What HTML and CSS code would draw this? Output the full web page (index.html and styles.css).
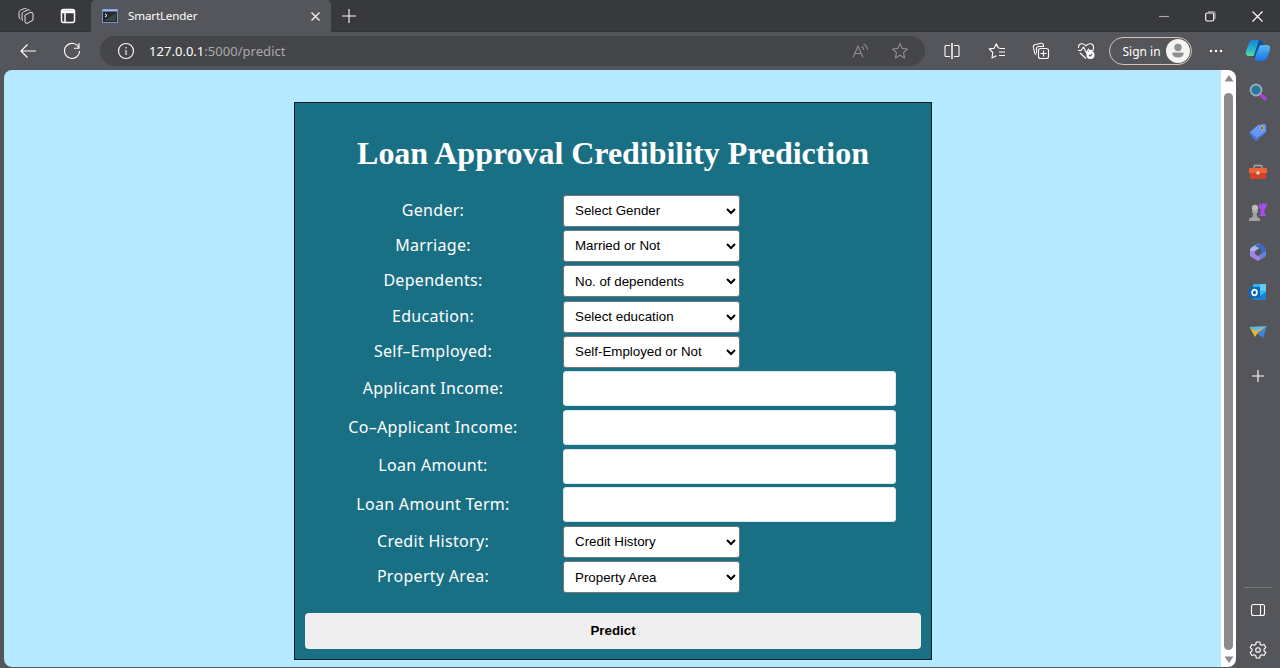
FILE: index.html
```html
<!DOCTYPE html>
<html lang="en">
<head>
<meta charset="utf-8">
<title>SmartLender</title>
<link rel="stylesheet" href="styles.css">
</head>
<body>
<div class="browser">
  <header class="tabstrip">
    <div class="strip-left">
      <svg class="ic thin" width="18" height="18" viewBox="0 0 18 18"><path d="M8 8l5-2.500q3-1 3 1.500v6l-5 3q-3 1.200-3-1.500z"/><path d="M6 14q-1-.5-1-2V7q0-1.500 1.500-2.200L11 2.800q1.500-.5 2 .8M3.500 12Q2 11.500 2 10V5.500Q2 4 3.500 3.200L7.500 1.500Q9 1 9.700 2"/></svg>
      <svg class="ic bold" width="16" height="16" viewBox="0 0 16 16"><rect x="1.500" y="1.500" width="13" height="13" rx="2"/><path d="M1.500 3h13M1.500 4.500h13M5 5v9.500"/></svg>
    </div>
    <div class="tab">
      <svg width="16" height="14" viewBox="0 0 16 14"><rect x=".5" y=".5" width="15" height="13" fill="#24292c" stroke="#7894cb"/><path d="M1 1.500h14" stroke="#9db9ee" stroke-width="2"/><path d="M3 5l2 1.500L3 8" stroke="#fff" fill="none"/><path d="M2 12L14 4v8z" fill="#3c4444"/></svg>
      <span class="tab-title">SmartLender</span>
      <svg class="ic" width="9" height="9" viewBox="0 0 9 9"><path d="M.5 .5l8 8M8.500 .5l-8 8"/></svg>
    </div>
    <svg class="ic newtab" width="14" height="14" viewBox="0 0 14 14"><path d="M7 0v14M0 7h14"/></svg>
    <div class="winctl">
      <svg class="ic dim" width="10" height="11" viewBox="0 0 10 11"><path d="M0 5.500h10"/></svg>
      <svg class="ic" width="11" height="11" viewBox="0 0 11 11"><rect x=".7" y="2" width="8" height="8" rx="1.500"/><path d="M3 .8h5.500a1.500 1.500 0 0 1 1.500 1.500V8" opacity=".6"/></svg>
      <svg class="ic" width="11" height="11" viewBox="0 0 11 11"><path d="M.5 .5l10 10M10.500 .5l-10 10"/></svg>
    </div>
  </header>

  <nav class="toolbar">
    <svg class="ic back" width="16" height="14" viewBox="0 0 16 14"><path d="M16 7H1M7.500 .5L1 7l6.500 6.500"/></svg>
    <svg class="ic reload" width="18" height="18" viewBox="0 0 18 18"><path d="M16 6.200A7.500 7.500 0 1 0 16.500 9M16 1v5.200h-5"/></svg>
    <div class="address">
      <svg class="ic" width="18" height="18" viewBox="0 0 18 18"><circle cx="9" cy="9" r="7.500"/><path d="M9 8v5M9 5v1.500"/></svg>
      <span class="url"><b>127.0.0.1</b>:5000/predict</span>
      <svg class="ic mute read" width="17" height="16" viewBox="0 0 17 16"><path d="M1 14.500L6 3l5 11.500M2.700 10.500h6.600M9.500 3.500q2 1 2.200 3.500M11.500 1q4 2 4 6"/></svg>
      <svg class="ic mute" width="18" height="18" viewBox="0 0 18 18"><path d="M9 1.500l2.200 4.900 5.300.6-4 3.600 1.200 5.400L9 13.300 4.300 16l1.200-5.400-4-3.600 5.300-.6z"/></svg>
    </div>
    <div class="tools">
      <svg class="ic" width="18" height="18" viewBox="0 0 18 18"><path d="M7 3.500H3a1 1 0 0 0-1 1v9a1 1 0 0 0 1 1h4M11 3.500h4a1 1 0 0 1 1 1v9a1 1 0 0 1-1 1h-4"/><path d="M9 1v16" stroke-width="1.500"/></svg>
      <svg class="ic" width="18" height="18" viewBox="0 0 18 18"><path d="M11.500 6l-1.300-.3L8.300 1.800 6.200 6.200l-5 .7 3.600 3.600-.8 5.500 4.300-2.300M11.500 6.500H17M11 10h6M11 13.500h6"/></svg>
      <svg class="ic" width="18" height="18" viewBox="0 0 18 18"><rect x="6.500" y="6.500" width="10" height="10" rx="2"/><path d="M11.500 8.500v6M8.500 11.500h6M4.500 12.500Q3 12.500 2.700 11L1.300 5Q1 3.300 2.700 2.700L9 1.300q1.700-.3 2.200 1.200l.5 1.700M4.500 11V6.500q0-2 2-2H12"/></svg>
      <svg class="ic" width="18" height="18" viewBox="0 0 18 18"><path d="M1.500 6C1 1 7 .5 9 4c2-3.500 8-3 7.500 2 0 1-.4 2-1 3M1 8.500h3L6.500 5l3 6 2-4 1 1.500h4M3 11l6 5.500"/><circle cx="13.500" cy="13" r="3.500" fill="#fff"/><path d="M12 13l1 1.200 2.200-2.400" stroke="#55565b"/></svg>
    </div>
    <div class="signin"><span>Sign in</span>
      <svg width="24" height="24" viewBox="0 0 24 24"><circle cx="12" cy="12" r="12" fill="#f4f4f4"/><circle cx="12" cy="8.500" r="3.700" fill="#909090"/><path d="M6.500 13.500h11v2q-1 3-5.500 3t-5.500-3z" fill="#909090"/></svg>
    </div>
    <svg class="more" width="14" height="4" viewBox="0 0 14 4"><g fill="#fff"><circle cx="2" cy="2" r="1.200"/><circle cx="7" cy="2" r="1.200"/><circle cx="12" cy="2" r="1.200"/></g></svg>
    <svg class="copilot" width="26" height="24" viewBox="0 0 26 24">
      <defs><linearGradient id="g1" x2="0" y2="1"><stop stop-color="#1785dc"/><stop offset=".6" stop-color="#26b7c7"/><stop offset="1" stop-color="#60dc94"/></linearGradient><linearGradient id="g2" x2="0" y2="1"><stop stop-color="#57baf4"/><stop offset="1" stop-color="#1672e8"/></linearGradient></defs>
      <path d="M8 1h7q3 0 2 3l-3 10q-1 3-4 3H4q-4 0-3-5L4 4q1-3 4-3z" fill="url(#g1)"/><path d="M14 1q4 0 4 3l1 2h-4l-4 10q-1 3-3 3z" fill="#174f96"/><path d="M18 6h4q4 0 3 5l-3 8q-1 3-4 3h-6q-3 0-2-3l4-10q1-3 4-3z" fill="url(#g2)"/>
    </svg>
  </nav>

  <div class="content">
    <main class="page">
      <form class="card">
        <h1>Loan Approval Credibility Prediction</h1>
        <div class="fields">
          <label>Gender:</label><select><option>Select Gender</option></select>
          <label>Marriage:</label><select><option>Married or Not</option></select>
          <label>Dependents:</label><select><option>No. of dependents</option></select>
          <label>Education:</label><select><option>Select education</option></select>
          <label>Self–Employed:</label><select><option>Self-Employed or Not</option></select>
          <label>Applicant Income:</label><input type="text">
          <label>Co–Applicant Income:</label><input type="text">
          <label>Loan Amount:</label><input type="text">
          <label>Loan Amount Term:</label><input type="text">
          <label>Credit History:</label><select><option>Credit History</option></select>
          <label>Property Area:</label><select><option>Property Area</option></select>
        </div>
        <button type="button">Predict</button>
      </form>
    </main>
    <div class="scroll">
      <svg width="10" height="7" viewBox="0 0 10 7"><path d="M5 0l4.500 6.500h-9z" fill="#8b8b8b"/></svg>
      <div class="thumb"></div>
      <svg width="10" height="7" viewBox="0 0 10 7"><path d="M5 7L.5 .5h9z" fill="#8b8b8b"/></svg>
    </div>
    <aside class="sidebar">
      <svg width="20" height="20" viewBox="0 0 20 20"><path d="M13 13l4 3.500" stroke="#b33ddd" stroke-width="3.500" stroke-linecap="round"/><circle cx="8" cy="8" r="5.500" fill="#28779f" stroke="#9badb4" stroke-width="1.800"/></svg>
      <svg width="20" height="20" viewBox="0 0 20 20"><path d="M10 3l6-1q2 0 2 2v6l-9 8q-1 1-2 0l-5-6q-1-1 0-2z" fill="#6896f4"/><path d="M2 12l5 6q1 1 2 0l9-8-1 0-8 6-7-6z" fill="#4873db"/><circle cx="14" cy="6" r="1.500" fill="#333" stroke="#e4c04b"/></svg>
      <svg width="20" height="20" viewBox="0 0 20 20"><path d="M6 6V4.500q0-1 1-1h6q1 0 1 1V6" fill="none" stroke="#aaa" stroke-width="1.300"/><rect x="1" y="6" width="18" height="5.500" rx="1" fill="#f06238"/><path d="M2 11h16v5q0 1-1 1H3q-1 0-1-1z" fill="#cf4424"/><circle cx="10" cy="11" r="1.700" fill="#ddd"/></svg>
      <svg width="20" height="20" viewBox="0 0 20 20"><path d="M11 2l2-.5.5 1.500 1-.2V1h2v1.500l1-.2V1H19l-1 5-1.500 1v4l2 3h-7l1-3V7L11 6z" fill="#a94aef"/><circle cx="7" cy="6" r="3.200" fill="#b9b9b9"/><path d="M4 9h6v2H8.500l.7 4 2.800 1.500V19H1v-2.500L4.500 15l.8-4H4z" fill="#a3a3a3"/></svg>
      <svg width="20" height="20" viewBox="0 0 20 20"><path d="M11 1L4 5q-2 1-2 3v6l5-2V9l6-4z" fill="#a5b6ec"/><path d="M11 1l6 4q1 1 1 3v6l-5-3V7L7 4z" fill="#3a69c6"/><path d="M18 9v4q0 1-1 2l-7 4-3-3 6-4z" fill="#6f7fd7"/><path d="M2 9v4q0 1 1 2l7 4 3-3-6-4V9z" fill="#a381df"/></svg>
      <svg width="20" height="20" viewBox="0 0 20 20"><rect x="5" y="2" width="13" height="15" rx="1" fill="#36b4ed"/><path d="M12 2h6v7h-6z" fill="#62cbf5"/><path d="M5 11l7 3 6-4v8H5z" fill="#1682d0"/><rect x="1" y="5" width="11" height="11" rx="1" fill="#0c68b6"/><ellipse cx="6.500" cy="10.500" rx="2.400" ry="2.800" fill="none" stroke="#fff" stroke-width="1.700"/></svg>
      <svg width="20" height="20" viewBox="0 0 20 20"><path d="M1 5l18-1-11 6z" fill="#59b9e9"/><path d="M2 6l6 3 11-5-10 8-2 3z" fill="#eab92c"/><path d="M9 11l10-7-4 12z" fill="#3f85dd"/></svg>
      <svg class="ic plus" width="20" height="20" viewBox="0 0 20 20"><path d="M10 4v12M4 10h12"/></svg>
      <div class="side-end">
        <svg class="ic" width="18" height="18" viewBox="0 0 18 18"><rect x="2.500" y="3.500" width="13" height="11" rx="2"/><path d="M11.500 4v10"/></svg>
        <svg class="ic" width="18" height="18" viewBox="0 0 18 18"><path d="M7.300 1h3.400l.6 2.500 1.400.8 2.400-.8 1.700 3L15 8.200v1.600l1.800 1.700-1.700 3-2.400-.8-1.400.8-.6 2.500H7.300l-.6-2.500-1.400-.8-2.400.8-1.700-3L3 9.800V8.200L1.200 6.500l1.700-3 2.400.8 1.400-.8z"/><circle cx="9" cy="9" r="2.300"/></svg>
      </div>
    </aside>
  </div>
</div>
</body>
</html>
```
FILE: styles.css
```css
* { box-sizing: border-box; }
body { margin: 0; }
svg { display: block; flex: none; }
.browser { width: 1280px; height: 668px; display: flex; flex-direction: column; overflow: hidden; background: #55565b; font-family: "Noto Sans", sans-serif; color: #fff; }
.ic { fill: none; stroke: #fff; stroke-width: 1.1; stroke-linejoin: round; }
.ic.thin { stroke-width: 1; stroke: #e4e4e4; }
.ic.bold { stroke-width: 1.5; }
.ic.dim { stroke: #aaa; }
.ic.mute { stroke: #8e8f92; }

.tabstrip { height: 32px; flex: none; display: flex; align-items: center; background: linear-gradient(#38393d 30px, #303135); }
.strip-left { width: 91px; padding-left: 17px; display: flex; align-items: center; gap: 25px; }
.tab { width: 240px; height: 32px; padding: 0 11px 0 11px; display: flex; align-items: center; background: #55565b; border-radius: 5px 5px 0 0; }
.tab-title { flex: 1; margin-left: 10px; padding-bottom: 1px; font-size: 11.6px; letter-spacing: -0.15px; }
.newtab { margin-left: 11px; }
.winctl { margin-left: auto; padding-right: 17px; display: flex; align-items: center; gap: 36px; }

.toolbar { height: 38px; flex: none; display: flex; align-items: center; padding-left: 20px; }
.reload { margin-left: 27px; }
.address { width: 825px; height: 30px; margin-left: 19px; padding: 0 16px 0 17px; display: flex; align-items: center; border-radius: 15px; background: #45464a; }
.url { flex: 1; margin-left: 14px; font-size: 13px; letter-spacing: 0.03px; color: #a9aaac; }
.url b { font-weight: 400; color: #fff; }
.read { margin-right: 22px; }
.tools { display: flex; gap: 26.5px; margin-left: 18px; }
.signin { width: 83px; height: 28px; margin-left: 14px; padding: 0 1px 0 13px; display: flex; align-items: center; justify-content: space-between; border: 1px solid #d9c2b2; border-radius: 14px; font-size: 12px; white-space: nowrap; }
.more { margin-left: 17px; }
.copilot { margin-left: 22px; }

.content { flex: 1; min-height: 0; display: flex; padding: 0 0 1px 4px; }
.page { width: 1217px; padding: 32px 0 0 290px; background: #b5e9ff; border-radius: 8px 0 0 8px; }
.scroll { width: 15px; padding: 5px 0 4px; display: flex; flex-direction: column; align-items: center; background: #fff; border-radius: 0 8px 8px 0; }
.thumb { width: 9px; flex: 1; margin: 11px 0 6px; border-radius: 5px; background: #8b8b8b; }

.card { width: 638px; height: 558px; padding: 0 10px; display: flex; flex-direction: column; background: #197085; border: 1px solid #0b1d22; }
.card h1 { margin: 31px 0 21px; font: bold 32px/38px "Liberation Serif", serif; letter-spacing: -0.03px; text-align: center; white-space: nowrap; }
.fields { display: grid; grid-template-columns: 256px 334px; column-gap: 2px; align-items: center; grid-template-rows: repeat(5, 35.3px) repeat(4, 38.7px) repeat(2, 35.3px); }
.fields label { padding-bottom: 2px; text-align: center; font-size: 16px; line-height: 22px; letter-spacing: 0.3px; white-space: nowrap; }
.fields select, .fields input { border: 1px solid #767676; border-radius: 3px; background: #fff; }
.fields select { width: 177px; height: 32px; padding: 0 4px 0 7px; font: 13.333px "Liberation Sans", Arial, sans-serif; color: #000; }
.fields input { width: 333px; height: 35px; border-color: #dfe9ec; }
.card button { width: 616px; height: 36px; margin-top: 18px; padding: 0 0 1px; border: 0; border-radius: 4px; background: #efefef; color: #000; font: bold 13.333px "Liberation Sans", Arial, sans-serif; }

.sidebar { width: 43px; padding: 12px 0 8px; display: flex; flex-direction: column; align-items: center; gap: 20px; }
.plus { margin-top: 4px; }
.side-end { width: 28px; margin-top: auto; padding-top: 13px; display: flex; flex-direction: column; align-items: center; gap: 22px; border-top: 1px solid #77787c; }
```
